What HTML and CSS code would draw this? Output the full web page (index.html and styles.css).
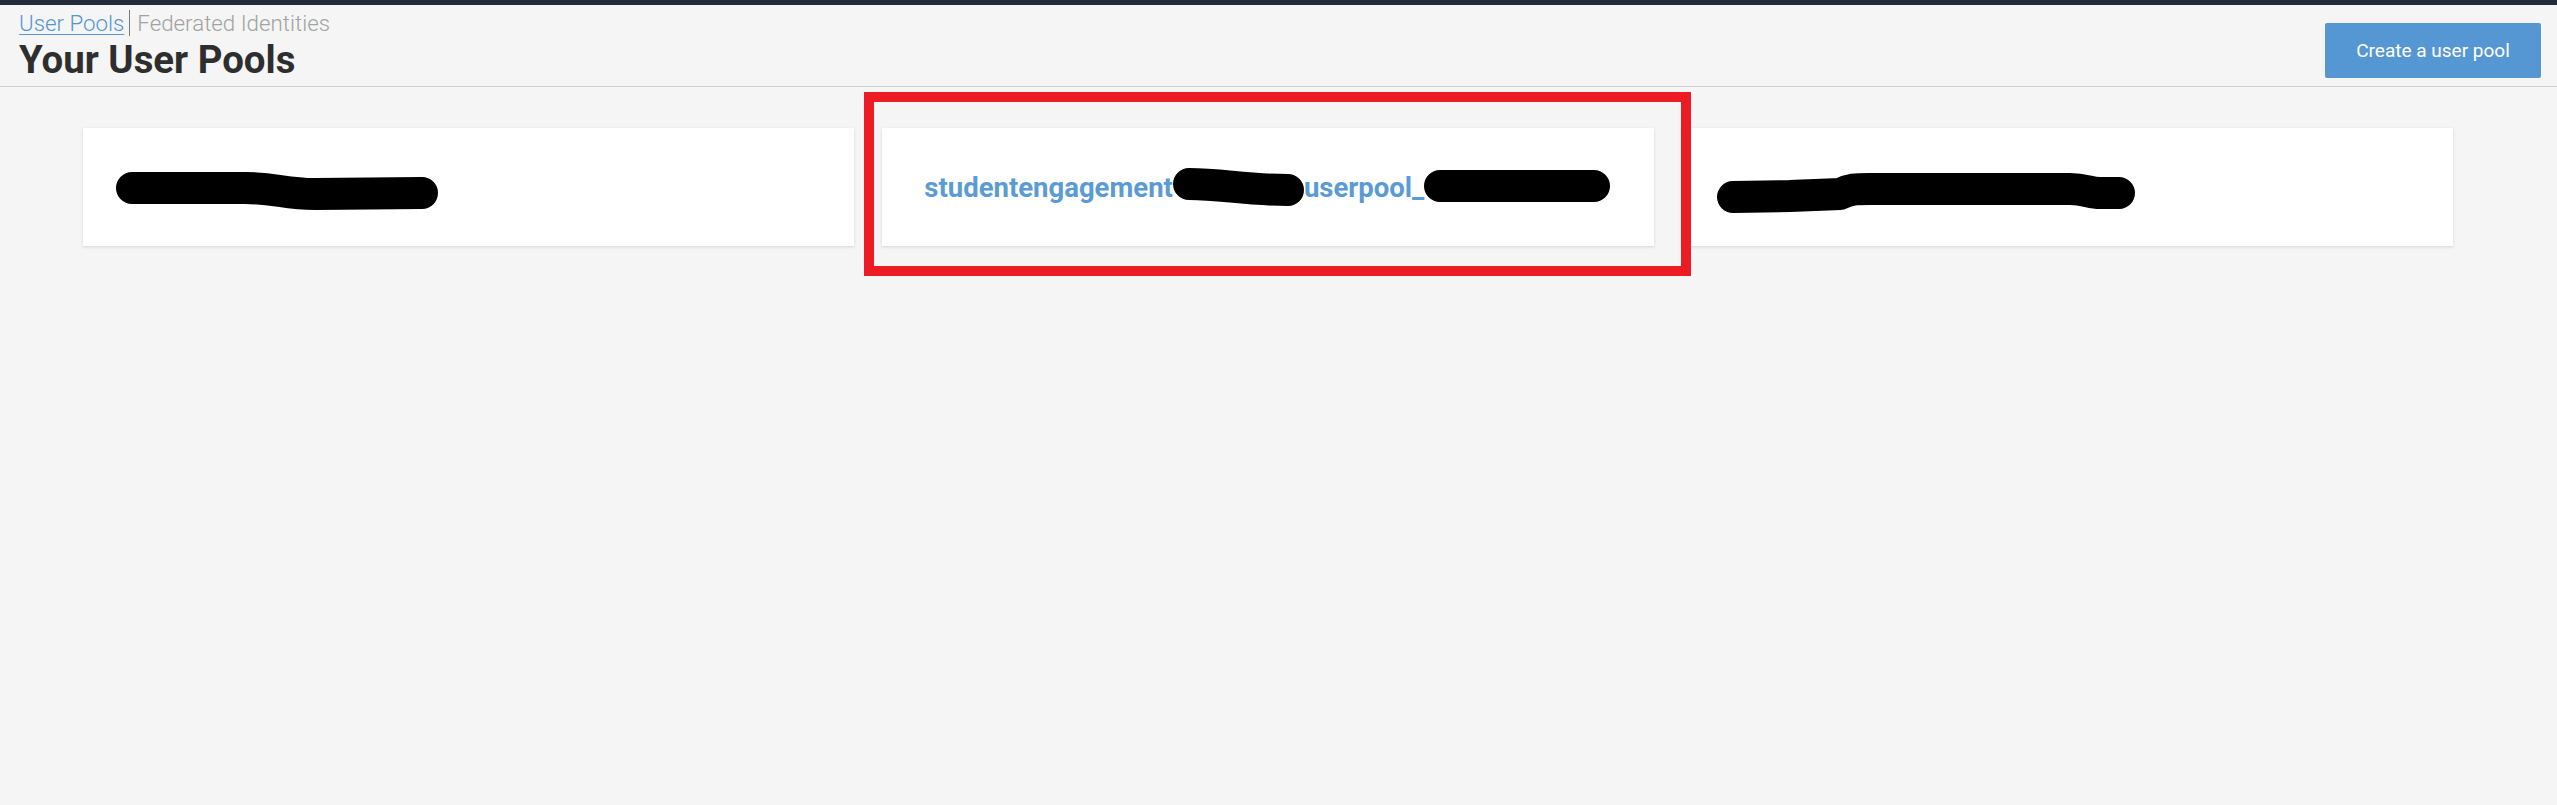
FILE: index.html
```html
<!DOCTYPE html>
<html lang="en">
<head>
<meta charset="utf-8">
<title>Your User Pools</title>
<link rel="stylesheet" href="styles.css">
</head>
<body>
<div class="topbar"></div>
<header class="header">
  <div class="header-left">
    <nav class="crumbs">
      <a class="crumb crumb-active" href="#">User Pools</a><span class="crumb crumb-sep">Federated Identities</span>
    </nav>
    <h1 class="title">Your User Pools</h1>
  </div>
  <button class="btn-create" type="button">Create a user pool</button>
</header>
<main class="pools">
  <div class="card">
    <svg class="redact redact-1" width="322" height="48" viewBox="0 0 322 48" aria-hidden="true">
      <path d="M16,25 L129,25 C159,25 169,31 199,31 L306,30" fill="none" stroke="#000" stroke-width="32" stroke-linecap="round" stroke-linejoin="round"/>
    </svg>
  </div>
  <div class="card card-selected">
    <span class="pool-name">studentengagement</span><svg class="redact redact-2a" width="131" height="40" viewBox="0 0 131 40" aria-hidden="true">
      <path d="M16,17 C50,17 70,23 115,23" fill="none" stroke="#000" stroke-width="32" stroke-linecap="round"/>
    </svg><span class="pool-name">userpool_</span><svg class="redact redact-2b" width="186" height="32" viewBox="0 0 186 32" aria-hidden="true">
      <rect x="0" y="0" width="186" height="32" rx="16" fill="#000"/>
    </svg>
    <div class="highlight"></div>
  </div>
  <div class="card">
    <svg class="redact redact-3" width="418" height="46" viewBox="0 0 418 46" aria-hidden="true">
      <path d="M16,30 L73,29 L123,27 C133,22 138,22 153,22 L353,22 C368,22 373,26 383,26 L402,26" fill="none" stroke="#000" stroke-width="32" stroke-linecap="round" stroke-linejoin="round"/>
    </svg>
  </div>
</main>
</body>
</html>
```

FILE: styles.css
```css
html, body {
  margin: 0;
  padding: 0;
}
body {
  background: #f4f5f4;
  font-family: Roboto, "Liberation Sans", Arial, sans-serif;
  width: 2557px;
  min-height: 805px;
}
.topbar {
  height: 5px;
  background: #232b3b;
}
.header {
  display: flex;
  justify-content: space-between;
  align-items: flex-start;
  padding: 5px 16px 4px 19px;
  border-bottom: 1px solid #cfd0cf;
}
.crumbs {
  font-size: 22.3px;
  font-weight: 300;
  line-height: 26px;
  height: 26px;
  white-space: nowrap;
}
.crumb-active {
  color: #5596d3;
  text-decoration: underline;
  text-underline-offset: 3px;
  text-decoration-thickness: 1px;
}
.crumb-sep {
  color: #a2a2a2;
  border-left: 1px solid #7a7a7a;
  margin-left: 5px;
  padding-left: 7px;
}
.title {
  margin: 2px 0 0;
  font-size: 38.4px;
  line-height: 44px;
  font-weight: 700;
  color: #2e2e2e;
}
.btn-create {
  margin-top: 13px;
  width: 216px;
  height: 55px;
  background: #5597d2;
  border: none;
  border-radius: 2px;
  color: #ffffff;
  font-family: Roboto, "Liberation Sans", Arial, sans-serif;
  font-size: 19px;
  font-weight: 400;
  padding: 0;
}
.pools {
  display: grid;
  grid-template-columns: 1fr 1fr 1fr;
  column-gap: 28px;
  padding: 41px 104px 0 83px;
}
.card {
  height: 118px;
  background: #ffffff;
  box-shadow: 0 1px 3px rgba(0, 0, 0, 0.13);
  display: flex;
  align-items: center;
  padding-left: 42px;
  box-sizing: border-box;
}
.card-selected {
  position: relative;
}
.pool-name {
  font-size: 27.5px;
  font-weight: 700;
  color: #5b9bd5;
  white-space: nowrap;
}
.redact {
  display: block;
  flex: none;
}
.redact-1 {
  margin-left: -9px;
}
.redact-3 {
  margin-left: -7px;
  margin-top: 6px;
}
.redact-2b {
  margin-top: -2px;
}
.highlight {
  position: absolute;
  left: -18px;
  top: -36px;
  width: 827px;
  height: 184px;
  box-sizing: border-box;
  border: 10px solid #ed1c24;
  z-index: 2;
  pointer-events: none;
}
```
